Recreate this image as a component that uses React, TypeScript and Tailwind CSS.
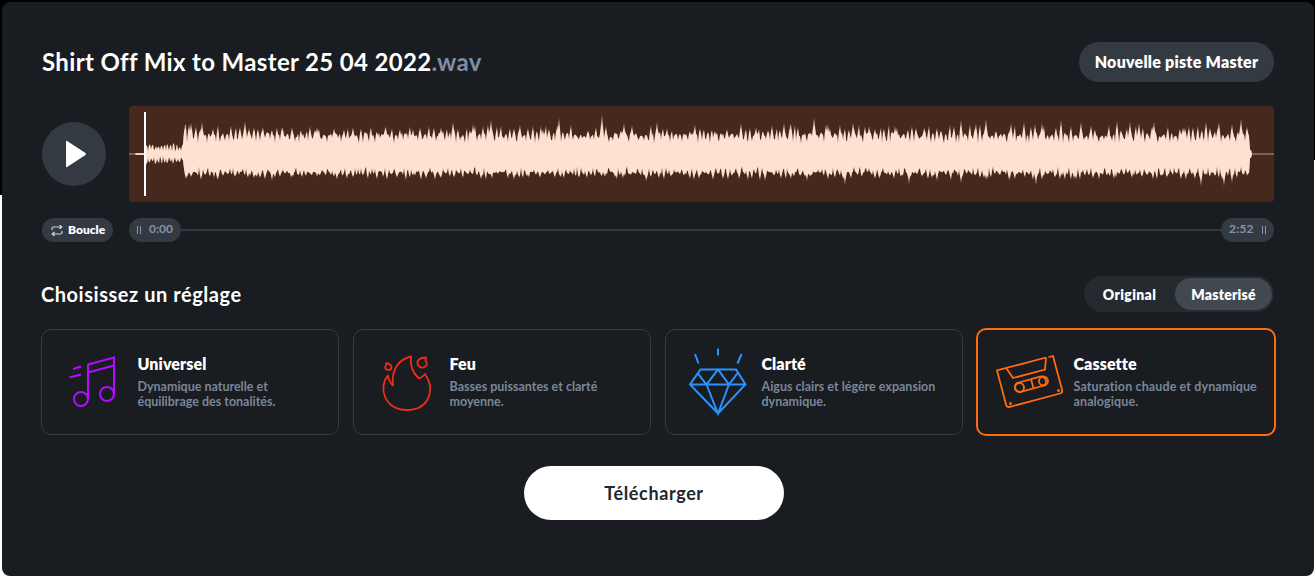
import { type ReactNode } from "react";
import { clsx } from "clsx";

const WAVE_WIDTH = 1145;
const WAVE_MID = 48;

// [x, height] of the loudest transients, above and below the centre line
const HIGH_PEAKS = [
  [56, 29], [62, 31], [73, 32], [84, 26], [116, 33], [134, 27], [154, 25], [163, 27], [188, 27],
  [205, 26], [215, 25], [224, 27], [256, 26], [284, 25], [312, 27], [324, 32], [344, 30], [362, 34],
  [391, 29], [414, 25], [430, 36], [473, 39], [495, 31], [503, 29], [528, 32], [538, 26], [565, 24],
  [612, 31], [627, 27], [655, 31], [662, 30], [685, 36], [699, 30], [724, 31], [740, 28], [766, 28],
  [795, 26], [832, 34], [847, 30], [857, 35], [882, 31], [895, 32], [906, 30], [913, 31], [932, 34],
  [952, 32], [962, 29], [988, 33], [1001, 32], [1010, 31], [1025, 32], [1054, 27], [1077, 32],
  [1090, 31], [1103, 30], [1112, 35],
];
const LOW_PEAKS = [
  [58, 23], [65, 18], [85, 24], [88, 24], [110, 21], [128, 23], [143, 27], [162, 24], [188, 23],
  [214, 21], [254, 23], [286, 22], [312, 24], [363, 25], [400, 24], [432, 23], [473, 22], [486, 23],
  [517, 27], [560, 22], [610, 25], [636, 27], [662, 25], [678, 27], [699, 26], [716, 31], [750, 24],
  [780, 30], [808, 27], [832, 29], [857, 26], [880, 26], [907, 31], [945, 25], [970, 26], [987, 24],
  [1024, 26], [1072, 32], [1095, 32], [1103, 29], [1118, 22],
];

function createRandom(seed: number) {
  let state = seed;
  return () => {
    state = (state * 1664525 + 1013904223) % 4294967296;
    return state / 4294967296;
  };
}

function buildSide(peaks: number[][], base: number, valley: number, spread: number, seed: number) {
  const random = createRandom(seed);
  const heights: number[] = [];
  while (heights.length < WAVE_WIDTH) {
    const x = heights.length;
    if (x < 16) {
      heights.push(x < 7 ? 0 : 0.7);
    } else if (x < 55) {
      heights.push(1.5 + random() * 3, 5 + random() * 5, 6 + random() * 5);
    } else if (x < 1119) {
      const crest = base + random() * spread;
      heights.push(valley + random() * 6, (base + crest) / 2, crest);
      if (random() > 0.4) heights.push(base + random() * 4);
      if (random() > 0.5) heights.push(base + random() * 5);
      if (random() > 0.6) heights.push(base - 3 + random() * 4);
    } else {
      heights.push(x < 1121 ? 12 : x < 1123 ? 4 : 0);
    }
  }
  peaks.forEach(([x, h]) => {
    heights[x] = h;
    heights[x - 1] = Math.max(heights[x - 1], h * 0.78);
    heights[x + 1] = Math.max(heights[x + 1], h * 0.74);
  });
  return heights.slice(0, WAVE_WIDTH);
}

const upper = buildSide(HIGH_PEAKS, 17, 10, 13, 71);
const lower = buildSide(LOW_PEAKS, 17.5, 12, 9, 29);

function wavePath(limit: number) {
  const clip = (h: number) => (h > limit ? limit + (h - limit) * 0.6 : h);
  const top = upper.map((h, x) => `${x} ${(WAVE_MID - clip(h)).toFixed(1)}`);
  const bottom = lower.map((h, x) => `${x} ${(WAVE_MID + clip(h)).toFixed(1)}`).reverse();
  return `M${top.join("L")}L${bottom.join("L")}Z`;
}

function Waveform() {
  return (
    <div className="relative h-24 w-[1145px] overflow-hidden rounded bg-[#46291d]">
      <svg className="block" width="1145" height="96" viewBox="0 0 1145 96" fill="#ffe1d1">
        <path d="M0 47H1145V49H0Z" opacity="0.3" />
        <path d={wavePath(100)} opacity="0.65" />
        <path d={wavePath(20)} />
      </svg>
      <div className="absolute left-[15px] top-1.5 h-[84px] w-0.5 bg-white" />
    </div>
  );
}

function NotesIcon() {
  return (
    <svg width="76" height="76" viewBox="-1 0 76 76" fill="none" stroke="#b30cff" strokeWidth="2">
      <circle cx="20" cy="54" r="7" />
      <circle cx="46" cy="49" r="7" />
      <path d="M27 54V19.5L53 12.5V49M27 27.5L53 20.5M12 24L20 21.5M8.500 32.500L20 29.500" />
    </svg>
  );
}

function FireIcon() {
  return (
    <svg width="76" height="76" viewBox="0.500 0 76 76" fill="none" stroke="#ee2d18" strokeWidth="1.8" strokeLinejoin="round">
      <path d="M39.500 11.500C28 14 19.500 24 21.500 40.500C19 38 17 35 16.500 30.500C6 43 13.500 65 35.500 65C58 65 64 44 53.500 29C52 31 50 32 47.500 33.500C41 28 38.500 20 39.500 11.500Z" />
      <path d="M54.500 12.500C48 12.500 45.500 15 46 18.500C46.500 22 50 23.500 53 22C56.500 20 55.500 17.500 54 15.800Z" />
      <path d="M14.500 18.200C17 18.500 20 20 20 22.500C19.500 26 14 25.500 13.800 22.500C13.500 21 15.500 20.500 14.500 18.200Z" />
    </svg>
  );
}

function DiamondIcon() {
  return (
    <svg width="76" height="76" viewBox="4 0 76 76" fill="none" stroke="#2b93ff" strokeWidth="2">
      <path d="M20.500 24.500H56L65.500 39.500L38 68.500L10 39.500ZM10 39.500H65.500M17.500 28L26.500 39.500L38 24.500L49 39.500L58 27.500M26.500 39.500L38 68.500L49 39.500M38 3.500V10.500M15 9L18.500 18.500M61.500 9L57.500 18.500" />
    </svg>
  );
}

function CassetteIcon() {
  return (
    <svg width="76" height="76" viewBox="3.5 -0.5 76 76" fill="none" stroke="#ff6b0d" strokeWidth="1.8">
      <path d="M54.500 13L5.500 26L14.500 60C15 62 16.500 62.800 18.500 62.300L68.500 49C70.500 48.500 71 47 70.500 45L61.500 11.500L57 12.600M54.500 13L53.500 25L21.500 33.500L15 24" />
      <path d="M25.500 38.500L49.500 32A5 5 0 0 1 52.500 41L28.500 47.500A5 5 0 0 1 25.500 38.500Z" />
      <circle cx="28" cy="43" r="4.500" />
      <circle cx="52" cy="36.500" r="4.500" />
      <path d="M39.500 34.800L42 43.800" />
      <circle cx="19" cy="59" r="0.600" />
      <circle cx="67" cy="46" r="0.600" />
    </svg>
  );
}

type PresetProps = {
  title: string;
  lines: string[];
  icon: ReactNode;
  selected?: boolean;
};

const presets: PresetProps[] = [
  { title: "Universel", lines: ["Dynamique naturelle et", "équilibrage des tonalités."], icon: <NotesIcon /> },
  { title: "Feu", lines: ["Basses puissantes et clarté", "moyenne."], icon: <FireIcon /> },
  { title: "Clarté", lines: ["Aigus clairs et légère expansion", "dynamique."], icon: <DiamondIcon /> },
  { title: "Cassette", lines: ["Saturation chaude et dynamique", "analogique."], icon: <CassetteIcon />, selected: true },
];

function PresetCard({ title, lines, icon, selected }: PresetProps) {
  return (
    <button
      className={clsx(
        "flex items-start rounded-[10px] text-left",
        selected
          ? "-m-px h-[108px] w-[300px] border-2 border-[#ff6b0d] pl-[17px] pt-[15px]"
          : "h-[106px] w-[298px] border border-[#343b43] pl-[18px] pt-4"
      )}
    >
      <span className="-mt-px h-[76px] w-[76px] shrink-0">{icon}</span>
      <span className={clsx("block whitespace-nowrap", selected ? "ml-[2.5px] mt-[9px]" : "ml-[1.5px] mt-2")}>
        <span className="mb-[5px] block text-base font-extrabold leading-5 tracking-[0.1px] text-white">{title}</span>
        {lines.map((line) => (
          <span
            key={line}
            className={clsx(
              "block text-[12.5px] font-bold leading-[15px] text-[#7a8699]",
              selected ? "tracking-[0.12px]" : "tracking-normal"
            )}
          >
            {line}
          </span>
        ))}
      </span>
    </button>
  );
}

function Grip() {
  return <span className="h-2 w-1 border-x border-[#8496b0]" />;
}

export default function App() {
  return (
    <div className="h-[579px] w-[1315px] overflow-hidden bg-[linear-gradient(to_right,#000_50%,transparent_50%),linear-gradient(#000_160px,#fff_160px)] bg-[length:100%_195px,100%_100%] bg-no-repeat pl-0.5 pt-0.5 font-['Lato',sans-serif]">
      <main className="flex h-[574px] w-[1312px] flex-col rounded-lg bg-[#191c20] pl-10 pr-10">
        <header className="mt-10 flex h-10 w-[1232px] items-center justify-between">
          <h1 className="whitespace-nowrap text-2xl font-bold tracking-[0.35px] text-white">
            Shirt Off Mix to Master 25 04 2022<span className="text-[#7f8da5]">.wav</span>
          </h1>
          <button className="h-10 w-[195px] whitespace-nowrap rounded-full bg-[#343a42] text-base font-extrabold tracking-[0.24px] text-white">
            Nouvelle piste Master
          </button>
        </header>

        <section className="mt-6 flex w-[1232px] items-center justify-between">
          <button aria-label="Lecture" className="flex size-16 items-center justify-center rounded-full bg-[#343a42]">
            <svg className="ml-1" width="22" height="28" viewBox="0 0 22 28" fill="#fff">
              <path d="M1 1.800Q1 0 2.500 1.200L20.500 13Q21.500 14 20.500 15L2.500 26.800Q1 28 1 26.200Z" />
            </svg>
          </button>
          <Waveform />
        </section>

        <section className="mt-4 flex h-6 w-[1232px] items-center">
          <button className="flex h-6 w-[71px] items-center gap-[5px] rounded-full bg-[#343a42] pl-[9px] text-xs font-extrabold text-white">
            <svg width="12" height="11" viewBox="0 0 12 11" fill="none" stroke="#d3d4d6" strokeWidth="1.2">
              <path d="M1 5V3.500Q1 2 2.500 2H10M8.500 0L10.800 2L8.500 4M11 6V7.500Q11 9 9.500 9H2M3.500 7L1.200 9L3.500 11" />
            </svg>
            Boucle
          </button>
          <div className="ml-4 flex h-6 w-[52px] items-center gap-2 rounded-full bg-[#343a42] pl-2 text-xs font-bold text-[#8492ab]">
            <Grip />
            <span className="-mt-0.5">0:00</span>
          </div>
          <div className="h-0.5 flex-1 bg-[#343a42]" />
          <div className="flex h-6 w-[53px] items-center gap-2 rounded-full bg-[#343a42] pl-2 text-xs font-bold text-[#8492ab]">
            <span className="-mt-0.5 tracking-[0.2px]">2:52</span>
            <Grip />
          </div>
        </section>

        <section className="mt-[34px] flex h-9 w-[1232px] items-center justify-between">
          <h2 className="-ml-px text-xl font-bold tracking-[0.54px] text-white">Choisissez un réglage</h2>
          <div className="flex h-9 w-[190px] items-center rounded-full bg-[#252a2f] pl-0.5 text-sm font-extrabold text-white">
            <button className="h-8 w-[89px] pr-0.5 pt-0.5 tracking-[0.35px]">Original</button>
            <button className="-mt-px h-8 w-[97px] rounded-full bg-[#424850] pt-[3px] tracking-[0.2px]">Masterisé</button>
          </div>
        </section>

        <section className="-ml-px mt-[17px] flex w-[1234px] justify-between">
          {presets.map((preset) => (
            <PresetCard key={preset.title} {...preset} />
          ))}
        </section>

        <button className="ml-[482px] mt-[31px] h-[54px] w-[260px] rounded-full bg-white text-lg font-bold tracking-[0.62px] text-[#22252c]">
          Télécharger
        </button>
      </main>
    </div>
  );
}
